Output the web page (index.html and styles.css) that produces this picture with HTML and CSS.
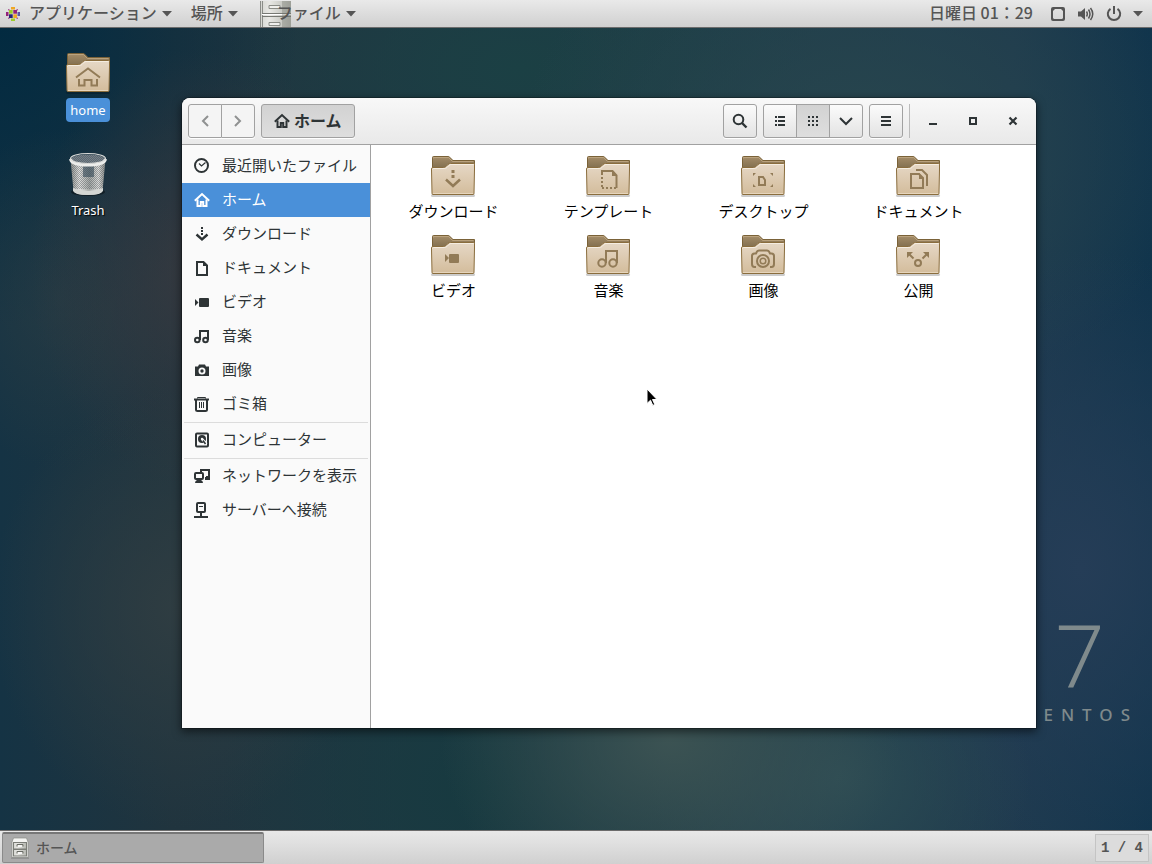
FILE: index.html
```html
<!DOCTYPE html>
<html lang="ja">
<head>
<meta charset="utf-8">
<title>ホーム</title>
<link rel="stylesheet" href="styles.css">
</head>
<body>

<!-- shared icons -->
<svg class="defs" aria-hidden="true">
  <defs>
    <linearGradient id="folder-front" x1="0" y1="0" x2="0" y2="1">
      <stop offset="0" stop-color="#e6d8c6"/>
      <stop offset="1" stop-color="#d3bc9b"/>
    </linearGradient>
    <linearGradient id="folder-back" x1="0" y1="0" x2="0" y2="1">
      <stop offset="0" stop-color="#a58d69"/>
      <stop offset="1" stop-color="#7c6a4b"/>
    </linearGradient>
    <linearGradient id="metal" x1="0" y1="0" x2="1" y2="0">
      <stop offset="0" stop-color="#8d908d"/>
      <stop offset=".25" stop-color="#e0e0de"/>
      <stop offset=".55" stop-color="#a4a8a6"/>
      <stop offset=".8" stop-color="#dcdcda"/>
      <stop offset="1" stop-color="#858885"/>
    </linearGradient>
    <linearGradient id="cab" x1="0" y1="0" x2="1" y2="0">
      <stop offset="0" stop-color="#d5d6d1"/>
      <stop offset=".3" stop-color="#e8e8e4"/>
      <stop offset="1" stop-color="#b4b6af"/>
    </linearGradient>
    <pattern id="mesh" width="2" height="2" patternUnits="userSpaceOnUse">
      <rect width="1" height="1" fill="#3c4448" opacity=".4"/>
      <rect x="1" y="1" width="1" height="1" fill="#3c4448" opacity=".4"/>
    </pattern>
    <symbol id="folder" viewBox="0 0 48 48">
      <rect x="2" y="42" width="44" height="3" rx="1.500" fill="#000" opacity=".2"/>
      <path d="M3.500 18V5.500q0-1 1-1H19q1 0 1.700.8L24 8.500h21.500V18z" fill="url(#folder-back)" stroke="#7a6238"/>
      <path d="M4.500 6.500V5.500H19.500L23.500 9.500H44.500" fill="none" stroke="#c1aa84" stroke-width=".8"/>
      <path d="M2.500 17q0-1.500 1.500-1.500h10.500q1.500 0 2.500-1l2-2q1-1 2.500-1h23q1 0 1 1V17l-.5 24.500q0 1-1 1h-40q-1 0-1-1z" fill="url(#folder-front)" stroke="#8a6d3d"/>
      <path d="M3.500 17.500q0-1 1-1h10.500q2 0 3-1l2-2q1-1 2-1h22.500" fill="none" stroke="#f5ede1"/>
      <path d="M4 41.500h40" stroke="#e6d5bc"/>
    </symbol>
    <symbol id="cabinet" viewBox="0 0 20 22">
      <path d="M3.500 1h13l1.500 4v15.500H2V5z" fill="#f4f4f2" stroke="#8a8c87" stroke-width=".7"/>
      <path d="M1 20.500h18V22H1z" fill="#666" opacity=".35"/>
      <rect x="3.500" y="5.500" width="13" height="6.500" fill="url(#cab)" stroke="#7b7d77"/>
      <rect x="3.500" y="12.500" width="13" height="6.500" fill="url(#cab)" stroke="#7b7d77"/>
      <path d="M7 9.500v-2h6v2M7 16.500v-2h6v2" fill="none" stroke="#6a6c65"/>
      <path d="M8 9h4M8 16h4" stroke="#fff" stroke-width="1.500"/>
    </symbol>
    <symbol id="i-home" viewBox="0 0 16 16">
      <path d="M.8 8.700 8 2l7.200 6.700" fill="none" stroke="currentColor" stroke-width="2"/>
      <path d="M3.500 7.500V14h3.300v-4h2.400v4h3.300V7.500" fill="none" stroke="currentColor" stroke-width="2"/>
    </symbol>
    <symbol id="i-video" viewBox="0 0 16 16">
      <rect x="5" y="4" width="10" height="9" rx="1" fill="currentColor"/>
      <path d="M1 5v7l3.500-3.500z" fill="currentColor"/>
    </symbol>
    <symbol id="i-down" viewBox="0 0 10 6"><path d="M0 0h10L5 5.500z" fill="currentColor"/></symbol>
  </defs>
</svg>

<header class="panel panel-top">
  <div class="menus">
    <button class="menu">
      <svg class="logo" width="14" height="14" viewBox="0 0 14 14">
        <path d="M3 3h3.700v3.700H3z" fill="#9ccd2a"/><path d="M7.300 3H11v3.700H7.300z" fill="#932279"/>
        <path d="M3 7.300h3.700V11H3z" fill="#262577"/><path d="M7.300 7.300H11V11H7.300z" fill="#efa724"/>
        <path d="M5 0h4v2.500H5z" fill="#efa724"/><path d="M14 5v4h-2.500V5z" fill="#5a58a8"/>
        <path d="M5 14v-2.500h4V14z" fill="#9ccd2a"/><path d="M0 5v4h2.500V5z" fill="#932279"/>
        <path d="M2 2h2L2 4zM12 2v2l-2-2zM2 12v-2l2 2zM12 12h-2l2-2z" fill="#b0609a"/>
      </svg>
      <span>アプリケーション</span>
      <svg class="caret" width="10" height="6"><use href="#i-down"/></svg>
    </button>
    <button class="menu">
      <span>場所</span>
      <svg class="caret" width="10" height="6"><use href="#i-down"/></svg>
    </button>
    <button class="menu menu-app">
      <svg class="app-icon" width="32" height="26" viewBox="0 0 32 26">
        <rect x="1" width="31" height="26" fill="url(#cab)"/>
        <path d="M1.500 0v26M3.500 0v26" stroke="#8b8d88"/>
        <path d="M3 12.500h29M3 15.500h29" stroke="#777973"/>
        <path d="M3 13.500h29" stroke="#fff"/>
        <path d="M10 7.500V4.500h11v3zM10 24.500v-3h11v3z" fill="#efefec" stroke="#8a8c86"/>
        <path d="M23 0h9v26h-9z" fill="#73766e" opacity=".35"/>
      </svg>
      <span>ファイル</span>
      <svg class="caret" width="10" height="6"><use href="#i-down"/></svg>
    </button>
  </div>
  <div class="status">
    <button class="clock"><span>日曜日 01：29</span></button>
    <button class="tray" aria-label="システム">
      <svg width="16" height="16" viewBox="0 0 16 16">
        <rect x="2" y="2" width="12" height="12" rx="1" fill="none" stroke="currentColor" stroke-width="2"/>
        <path d="M2 2h4L2 6zM14 2h-4l4 4zM2 14v-3l3 3zM14 14v-3l-3 3z" fill="currentColor"/>
      </svg>
      <svg width="18" height="16" viewBox="0 0 18 16">
        <path d="M1 5.500h3L8 2v12l-4-3.500H1z" fill="currentColor"/>
        <path d="M9.500 5.500q1.600 2.500 0 5M11.500 3.500q3 4.500 0 9M13.500 2q4.500 6 0 12" fill="none" stroke="currentColor" stroke-width="1.500"/>
      </svg>
      <svg width="16" height="16" viewBox="0 0 16 16">
        <path d="M4.500 2.800a6.200 6.200 0 1 0 7 0M8 0v8" fill="none" stroke="currentColor" stroke-width="2"/>
      </svg>
      <svg width="10" height="6"><use href="#i-down"/></svg>
    </button>
  </div>
</header>

<main class="desktop">
  <div class="brand">
    <div class="brand-number">7</div>
    <div class="brand-name">ENTOS</div>
  </div>

  <div class="shortcuts">
    <a class="shortcut selected" href="#home">
      <svg width="48" height="48" viewBox="0 0 48 48">
        <use href="#folder"/>
        <g fill="none" stroke="#927b57" stroke-width="2">
          <path d="M12 28.500l12-9 12 9" />
          <path d="M15 30v6.500h5.500V31h7v5.500H33V30" />
        </g>
      </svg>
      <span>home</span>
    </a>
    <a class="shortcut" href="#trash">
      <svg width="48" height="48" viewBox="0 0 48 48">
        <ellipse cx="24" cy="43" rx="17" ry="4" fill="#000" opacity=".4"/>
        <path d="M6.500 10 9.500 42q1 4 14.500 4t14.500-4l3-32z" fill="url(#metal)"/>
        <path d="M19 17h11v11H19z" fill="#344b5c" opacity=".6"/>
        <path d="M7 12 9.500 40h29L41 12z" fill="url(#mesh)"/>
        <path d="M9 39q15 6 30 0v3q-3 4-15 4T9 42z" fill="#d4d6d3"/>
        <ellipse cx="24" cy="10" rx="17" ry="4.500" fill="#75818a"/>
        <ellipse cx="24" cy="10" rx="17" ry="4.500" fill="url(#mesh)"/>
        <path d="M6.500 10q1 6 17.500 6t17.500-6" fill="none" stroke="#ecedeb" stroke-width="3"/>
        <ellipse cx="24" cy="9.500" rx="17.500" ry="5" fill="none" stroke="#d9dad8" stroke-width="1.200"/>
      </svg>
      <span>Trash</span>
    </a>
  </div>

  <section class="window">
    <div class="headerbar">
      <div class="group">
        <button class="btn flat" aria-label="戻る">
          <svg width="16" height="16" viewBox="0 0 16 16"><path d="M11 3 6 8l5 5" fill="none" stroke="#8f9191" stroke-width="2"/></svg>
        </button>
        <button class="btn flat" aria-label="進む">
          <svg width="16" height="16" viewBox="0 0 16 16"><path d="M5 3l5 5-5 5" fill="none" stroke="#8f9191" stroke-width="2"/></svg>
        </button>
      </div>
      <button class="btn path active">
        <svg width="16" height="16"><use href="#i-home"/></svg>
        <span>ホーム</span>
      </button>

      <button class="btn push" aria-label="検索">
        <svg width="16" height="16" viewBox="0 0 16 16"><circle cx="6.500" cy="6.500" r="4.800" fill="none" stroke="currentColor" stroke-width="2"/><path d="M10 10l4.500 4.500" stroke="currentColor" stroke-width="2.400"/></svg>
      </button>
      <div class="group">
        <button class="btn" aria-label="リスト表示">
          <svg width="16" height="16" viewBox="0 0 16 16"><path d="M3 4h2M3 8h2M3 12h2M6 4h7M6 8h7M6 12h7" stroke="currentColor" stroke-width="2"/></svg>
        </button>
        <button class="btn active" aria-label="アイコン表示">
          <svg width="16" height="16" viewBox="0 0 16 16"><path d="M3 4h2M7 4h2M11 4h2M3 8h2M7 8h2M11 8h2M3 12h2M7 12h2M11 12h2" stroke="currentColor" stroke-width="2"/></svg>
        </button>
        <button class="btn" aria-label="表示オプション">
          <svg width="16" height="16" viewBox="0 0 16 16"><path d="M2 5l6 6 6-6" fill="none" stroke="currentColor" stroke-width="2"/></svg>
        </button>
      </div>
      <button class="btn" aria-label="メニュー">
        <svg width="16" height="16" viewBox="0 0 16 16"><path d="M3 4h10M3 8h10M3 12h10" stroke="currentColor" stroke-width="2"/></svg>
      </button>
      <div class="controls">
        <button class="control" aria-label="最小化">
          <svg width="16" height="16" viewBox="0 0 16 16"><path d="M4 11h8" stroke="currentColor" stroke-width="2"/></svg>
        </button>
        <button class="control" aria-label="最大化">
          <svg width="16" height="16" viewBox="0 0 16 16"><rect x="5" y="5" width="6" height="6" fill="none" stroke="currentColor" stroke-width="2"/></svg>
        </button>
        <button class="control" aria-label="閉じる">
          <svg width="16" height="16" viewBox="0 0 16 16"><path d="M4.500 4.500l7 7M11.500 4.500l-7 7" stroke="currentColor" stroke-width="2.200"/></svg>
        </button>
      </div>
    </div>

    <div class="content">
      <nav class="sidebar">
        <a class="place" href="#recent">
          <svg width="16" height="16" viewBox="0 0 16 16"><circle cx="7.500" cy="7.500" r="6.500" fill="none" stroke="currentColor" stroke-width="2"/><path d="M5 5.500l2.500 2.500L11.500 4.500" fill="none" stroke="currentColor" stroke-width="1.200"/></svg>
          <span>最近開いたファイル</span>
        </a>
        <a class="place current" href="#home">
          <svg width="16" height="16"><use href="#i-home"/></svg>
          <span>ホーム</span>
        </a>
        <a class="place" href="#downloads">
          <svg width="16" height="16" viewBox="0 0 16 16"><path d="M8 1v8" stroke="currentColor" stroke-width="2" stroke-dasharray="2 1"/><path d="M2.500 8.500 8 13.500l5.500-5" fill="none" stroke="currentColor" stroke-width="2.400"/></svg>
          <span>ダウンロード</span>
        </a>
        <a class="place" href="#documents">
          <svg width="16" height="16" viewBox="0 0 16 16"><path d="M3 2h6.500L13 5.500V15H3z" fill="none" stroke="currentColor" stroke-width="2"/><path d="M9 1v5h5z" fill="currentColor"/></svg>
          <span>ドキュメント</span>
        </a>
        <a class="place" href="#videos">
          <svg width="16" height="16"><use href="#i-video"/></svg>
          <span>ビデオ</span>
        </a>
        <a class="place" href="#music">
          <svg width="16" height="16" viewBox="0 0 16 16"><g fill="none" stroke="currentColor" stroke-width="2"><circle cx="3.300" cy="12" r="2.300"/><circle cx="11.500" cy="12" r="2.300"/><path d="M6 12V3h8v9"/></g></svg>
          <span>音楽</span>
        </a>
        <a class="place" href="#pictures">
          <svg width="16" height="16" viewBox="0 0 16 16"><path d="M1 4.500h3l1-2h6l1 2h3V14H1z" fill="currentColor"/><circle cx="8" cy="9" r="2.600" fill="none" stroke="#fafafa" stroke-width="1.800"/></svg>
          <span>画像</span>
        </a>
        <a class="place" href="#trash">
          <svg width="16" height="16" viewBox="0 0 16 16"><path d="M2 4v10q0 1 1.500 1h8q1.500 0 1.500-1V4" fill="none" stroke="currentColor" stroke-width="2"/><path d="M0 3.500h15" stroke="currentColor" stroke-width="2"/><path d="M3.500 2.500v-1h8v1" fill="none" stroke="currentColor"/><path d="M5.500 6v6M7.500 6v6M9.500 6v6" stroke="currentColor"/></svg>
          <span>ゴミ箱</span>
        </a>
        <hr>
        <a class="place" href="#computer">
          <svg width="16" height="16" viewBox="0 0 16 16"><rect x="2" y="1.500" width="12" height="13" rx="1" fill="none" stroke="currentColor" stroke-width="2"/><circle cx="8" cy="7" r="4" fill="currentColor"/><circle cx="8" cy="7" r="1.200" fill="#fafafa"/><path d="M8 7l4.500 5" stroke="#fafafa" stroke-width="2.600"/><path d="M9 8.500l2.500 3.500" stroke="currentColor" stroke-width="1.500"/></svg>
          <span>コンピューター</span>
        </a>
        <hr>
        <a class="place" href="#network">
          <svg width="16" height="16" viewBox="0 0 16 16"><path d="M7 4V2h8v7h-3" fill="none" stroke="currentColor" stroke-width="2"/><rect x="1" y="5" width="8" height="6" rx="1" fill="none" stroke="currentColor" stroke-width="2"/><path d="M1 15q0-2 2-3h4q2 1 2 3zM11 9h5v3h-5z" fill="currentColor"/></svg>
          <span>ネットワークを表示</span>
        </a>
        <a class="place" href="#connect">
          <svg width="16" height="16" viewBox="0 0 16 16"><rect x="3" y="1" width="8" height="9" rx="1" fill="none" stroke="currentColor" stroke-width="2"/><path d="M5 4.500h4" stroke="currentColor"/><path d="M7 10v4M0 15h14" stroke="currentColor" stroke-width="2"/></svg>
          <span>サーバーへ接続</span>
        </a>
      </nav>

      <div class="files">
        <a class="file" href="#downloads">
          <svg width="48" height="48" viewBox="0 0 48 48"><use href="#folder"/><path d="M24 18v10" stroke="#927b57" stroke-width="3" stroke-dasharray="3 2"/><path d="M17 27.500l7 6.500 7-6.500" fill="none" stroke="#927b57" stroke-width="2.500"/></svg>
          <span>ダウンロード</span>
        </a>
        <a class="file" href="#templates">
          <svg width="48" height="48" viewBox="0 0 48 48"><use href="#folder"/><path d="M18 23v-4h10.500l4 4.500V36" fill="none" stroke="#927b57" stroke-width="2"/><path d="M28 18v6h5z" fill="#927b57"/><path d="M18 25v10M18 36h14" stroke="#927b57" stroke-width="2" stroke-dasharray="2 2"/></svg>
          <span>テンプレート</span>
        </a>
        <a class="file" href="#desktop">
          <svg width="48" height="48" viewBox="0 0 48 48"><use href="#folder"/><path d="M14 21h3l-3 3zM34 21h-3l3 3zM14 35v-3l3 3zM34 35v-3l-3 3z" fill="#927b57"/><path d="M20 25h4l2 3v5h-6z" fill="none" stroke="#927b57" stroke-width="2"/></svg>
          <span>デスクトップ</span>
        </a>
        <a class="file" href="#documents">
          <svg width="48" height="48" viewBox="0 0 48 48"><use href="#folder"/><path d="M17 22h8l4 4v10H17z" fill="none" stroke="#927b57" stroke-width="2"/><path d="M25 21v6h5z" fill="#927b57"/><path d="M22 18h6l5 5v11" fill="none" stroke="#927b57" stroke-width="2"/></svg>
          <span>ドキュメント</span>
        </a>
        <a class="file" href="#videos">
          <svg width="48" height="48" viewBox="0 0 48 48"><use href="#folder"/><path d="M16 23v8l4-4z" fill="#927b57"/><rect x="20" y="23" width="10" height="9" rx="1" fill="#927b57"/></svg>
          <span>ビデオ</span>
        </a>
        <a class="file" href="#music">
          <svg width="48" height="48" viewBox="0 0 48 48"><use href="#folder"/><g fill="none" stroke="#927b57" stroke-width="2"><circle cx="18" cy="32" r="3.700"/><circle cx="29" cy="32" r="3.700"/><path d="M22 32V20h11v12"/></g></svg>
          <span>音楽</span>
        </a>
        <a class="file" href="#pictures">
          <svg width="48" height="48" viewBox="0 0 48 48"><use href="#folder"/><g fill="none" stroke="#927b57"><path d="M17 36h-1.500q-2.500 0-2.500-3v-8q0-2.500 2.500-2.500H17l1-2q.5-1 2-1h8q1.500 0 2 1l1 2h1.500q2.500 0 2.500 2.500v8q0 3-2.500 3H31" stroke-width="2"/><circle cx="24" cy="30" r="6" stroke-width="2"/><circle cx="24" cy="30" r="2.800" stroke-width="1.500"/></g></svg>
          <span>画像</span>
        </a>
        <a class="file" href="#public">
          <svg width="48" height="48" viewBox="0 0 48 48"><use href="#folder"/><path d="M13 21h6l-6 6zM35 21h-6l6 6z" fill="#927b57"/><g fill="none" stroke="#927b57" stroke-width="2"><circle cx="24" cy="32" r="3"/><path d="M15 23l4.500 4.500M33 23l-4.500 4.500"/></g></svg>
          <span>公開</span>
        </a>
      </div>
    </div>
  </section>

  <svg class="pointer" width="14" height="20" viewBox="0 0 14 20">
    <path d="M1 1v14.500l3.500-3.300 2.300 5.200 2-.9-2.300-5H11z" fill="#000" stroke="#fff"/>
  </svg>
</main>

<footer class="panel panel-bottom">
  <button class="task">
    <svg width="20" height="22"><use href="#cabinet"/></svg>
    <span>ホーム</span>
  </button>
  <button class="pager">1 / 4</button>
</footer>

</body>
</html>
```
FILE: styles.css
```css
* {
  box-sizing: border-box;
}

body {
  margin: 0;
  min-height: 100vh;
  display: flex;
  flex-direction: column;
  font-family: "Noto Sans CJK JP", "Noto Sans", sans-serif;
  font-size: 15px;
  color: #2e3436;
}

button {
  font: inherit;
  color: inherit;
  border: 0;
  background: none;
  padding: 0;
}

a {
  color: inherit;
  text-decoration: none;
}

svg {
  display: block;
  flex: none;
}

.defs {
  position: absolute;
  width: 0;
  height: 0;
}

/* text sits a little above the icon centre line */
.menu span,
.clock span,
.task span,
.path span,
.place span {
  display: block;
  padding-bottom: 3px;
}

/* panels */
.panel {
  display: flex;
  justify-content: space-between;
  background: linear-gradient(#e9e9e9, #d0d0d0);
  color: #555;
  font-size: 16px;
  font-weight: 500;
}

.panel-top {
  height: 28px;
  border-bottom: 1px solid #6c6c6c;
}

.menus {
  display: flex;
  gap: 19px;
  padding-left: 6px;
}

.menu {
  display: flex;
  align-items: center;
  line-height: 24px;
}

.logo {
  margin-right: 9px;
}

.caret {
  margin-left: 5px;
}

.menu-app {
  padding-left: 2px;
}

.menu-app .app-icon {
  margin-right: -14px;
}

.status {
  display: flex;
  align-items: center;
  gap: 17px;
  padding-right: 9px;
  line-height: 24px;
}

.tray {
  display: flex;
  align-items: center;
  gap: 11px;
}

.panel-bottom {
  height: 34px;
  border-top: 1px solid #6c6c6c;
  padding: 1px 3px 1px 2px;
}

.task {
  display: flex;
  align-items: center;
  gap: 6px;
  width: 262px;
  padding-left: 7px;
  border: 1px solid #8a8a8a;
  border-top: 2px solid #777;
  border-radius: 2px;
  background: #aaa;
  font-size: 14px;
}

.pager {
  align-self: center;
  padding: 0 5px;
  height: 28px;
  border: 1px solid #c4c4c4;
  background: #dcdcdc;
  font: bold 14px "Liberation Mono", monospace;
}

/* desktop */
.desktop {
  flex: 1;
  position: relative;
  background:
    radial-gradient(ellipse 170px 220px at 200px 240px, rgba(58, 58, 64, .8), transparent),
    radial-gradient(ellipse 130px 170px at 60px 270px, rgba(44, 62, 68, .6), transparent),
    radial-gradient(ellipse 190px 220px at 180px 580px, #2f3d42, transparent),
    radial-gradient(ellipse 230px 190px at 670px 710px, #3c5353, transparent),
    radial-gradient(ellipse 190px 170px at 840px 750px, #2d4c54, transparent),
    radial-gradient(ellipse 260px 240px at 480px 760px, #173a40, transparent),
    radial-gradient(ellipse 240px 320px at 1080px 540px, #253d57, transparent),
    radial-gradient(ellipse 340px 260px at 860px 120px, #28464e, transparent),
    radial-gradient(ellipse 300px 160px at 520px 40px, #1b4044, transparent),
    radial-gradient(ellipse 300px 300px at 0 0, #022a40, transparent),
    linear-gradient(90deg, #153344, #20343e 15%, #1e3c48 60%, #1e3a4e 88%, #10344c);
}

.brand {
  position: absolute;
  right: 14px;
  bottom: 103px;
  color: #7f8a8c;
}

.brand-number {
  padding-left: 12px;
  font: 300 88px/90px Roboto, sans-serif;
}

.brand-name {
  font: 500 17px/24px "Noto Sans", sans-serif;
  letter-spacing: 8px;
}

.shortcuts {
  display: flex;
  flex-direction: column;
  gap: 27px;
  width: 88px;
  margin-left: 44px;
  padding-top: 21px;
}

.shortcut {
  display: flex;
  flex-direction: column;
  align-items: center;
  gap: 1px;
  color: #fff;
  font-family: "Noto Sans", sans-serif;
  font-size: 13px;
  line-height: 24px;
  text-shadow: 1px 1px 1px #000;
}

.shortcut span {
  padding: 0 4px;
  border-radius: 4px;
}

.shortcut.selected span {
  background: #4a90d9;
  text-shadow: none;
}

.pointer {
  position: absolute;
  left: 646px;
  top: 360px;
}

/* file manager window */
.window {
  position: absolute;
  top: 70px;
  right: 116px;
  bottom: 102px;
  left: 182px;
  display: flex;
  flex-direction: column;
  border-radius: 8px 8px 0 0;
  background: #fff;
  box-shadow: 0 0 0 1px rgba(0, 0, 0, .25), 0 3px 9px 1px rgba(0, 0, 0, .5);
  overflow: hidden;
}

.headerbar {
  display: flex;
  align-items: center;
  gap: 6px;
  height: 47px;
  padding: 0 3px 0 6px;
  background: linear-gradient(#f8f8f8, #e9e9e9);
  border-bottom: 1px solid #a1a1a1;
}

.group {
  display: flex;
}

.btn {
  display: flex;
  align-items: center;
  justify-content: center;
  width: 34px;
  height: 34px;
  border: 1px solid #a1a1a1;
  border-radius: 3px;
  background: linear-gradient(#fbfbfb, #e3e3e3);
  box-shadow: 0 1px #fff;
}

.group .btn:not(:last-child) {
  border-top-right-radius: 0;
  border-bottom-right-radius: 0;
}

.group .btn + .btn {
  margin-left: -1px;
  border-top-left-radius: 0;
  border-bottom-left-radius: 0;
}

.btn.flat {
  background: #f4f4f4;
}

.btn.active {
  background: linear-gradient(#d2d2d2, #dedede);
}

.btn.path {
  width: auto;
  padding: 0 12px;
  gap: 4px;
  font-size: 16px;
  font-weight: bold;
}

.push {
  margin-left: auto;
}

.controls {
  display: flex;
  align-items: center;
  height: 34px;
  padding-left: 3px;
  border-left: 1px solid #bbb;
}

.control {
  display: flex;
  align-items: center;
  justify-content: center;
  width: 40px;
  height: 34px;
}

.content {
  flex: 1;
  display: flex;
}

.sidebar {
  flex: none;
  width: 189px;
  padding-top: 4px;
  border-right: 1px solid #a1a1a1;
  background: #fafafa;
}

.place {
  display: flex;
  align-items: center;
  gap: 12px;
  height: 34px;
  padding-left: 12px;
  white-space: nowrap;
}

.place.current {
  background: #4a90d9;
  color: #fff;
}

.sidebar hr {
  margin: 1px 2px 0;
  border: 0;
  border-top: 1px solid #dcdcdc;
}

.files {
  flex: 1;
  display: grid;
  grid-template-columns: repeat(auto-fill, 155px);
  grid-auto-rows: 79px;
  align-content: start;
  padding: 7px 0 0 5px;
}

.file {
  display: flex;
  flex-direction: column;
  align-items: center;
  color: #000;
  line-height: 22px;
}

.file svg {
  margin-right: 1px;
}
```
